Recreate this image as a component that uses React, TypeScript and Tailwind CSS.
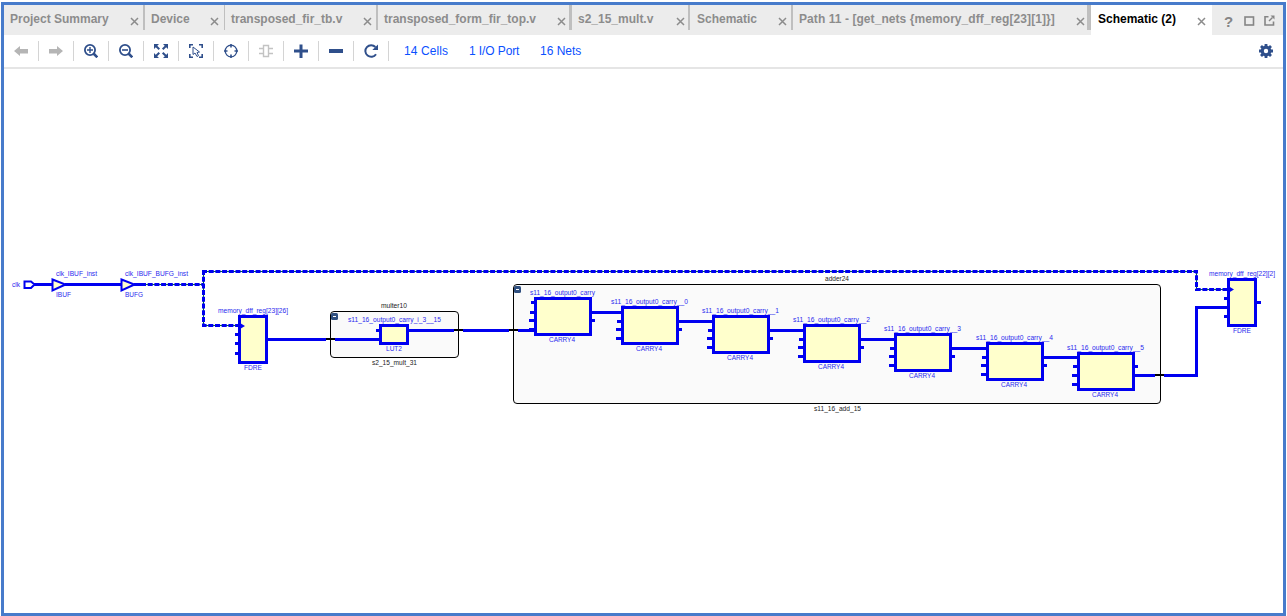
import React from "react";

type TabProps = { label: string; width: string; sep: string; text?: string; close?: string; active?: boolean };

const tabs: TabProps[] = [
  { label: "Project Summary", width: "w-[141px]", sep: "border-r-2" },
  { label: "Device", width: "w-[80px]", sep: "border-r", close: "mr-[5px]" },
  { label: "transposed_fir_tb.v", width: "w-[153px]", sep: "border-r-2" },
  { label: "transposed_form_fir_top.v", width: "w-[194px]", sep: "border-r-3", close: "mr-[3px]" },
  { label: "s2_15_mult.v", width: "w-[118px]", sep: "border-r-2", close: "mr-[3px]" },
  { label: "Schematic", width: "w-[103px]", sep: "border-r-2", text: "pl-[1px]" },
  {
    label: "Path 11 - [get_nets {memory_dff_reg[23][1]}]",
    width: "w-[298px]",
    sep: "border-r-4",
    text: "tracking-[0.07px]",
    close: "mr-[2px]",
  },
  { label: "Schematic (2)", width: "w-[121px]", sep: "", text: "pl-[1px]", close: "mr-[6px]", active: true },
];

function Tab({ label, width, sep, text = "", close = "mr-[4px]", active }: TabProps) {
  return (
    <div className={`h-[30px] shrink-0 ${width} ${active ? "bg-white" : ""}`}>
      <div className={`flex h-[25px] items-center justify-between border-[#bfbfbf] pl-[6px] ${sep}`}>
        <span
          className={`pt-[3px] text-[12px] leading-[14px] font-bold whitespace-pre ${text} ${active ? "text-black" : "text-[#8c8c8c]"}`}
        >
          {label}
        </span>
        <svg className={`mt-[7px] shrink-0 ${close}`} width="9" height="9" viewBox="0 0 9 9">
          <path d="M1 1L8 8M8 1L1 8" stroke="#8c8c8c" strokeWidth="1.5" />
        </svg>
      </div>
    </div>
  );
}

const navy = "#2f4f8b";

const icons: React.ReactNode[] = [
  <path d="M0 7L6 2V5H14V9.5H6V12Z" fill="#b5b5b5" />,
  <path d="M14 7L8 2V5H0V9.5H8V12Z" fill="#b5b5b5" />,
  <g stroke={navy} fill="none">
    <circle cx="6" cy="6" r="5.1" strokeWidth="1.8" />
    <path d="M3 6H9M6 3V9" strokeWidth="1.4" />
    <path d="M9.5 9.5L13.3 13.3" strokeWidth="2.6" />
  </g>,
  <g stroke={navy} fill="none">
    <circle cx="6" cy="6" r="5.1" strokeWidth="1.8" />
    <path d="M3 6H9" strokeWidth="1.6" />
    <path d="M9.5 9.5L13.3 13.3" strokeWidth="2.6" />
  </g>,
  <g fill={navy} stroke={navy}>
    <path d="M0 0H5L0 5ZM14 0V5L9 0ZM0 14V9L5 14ZM14 14H9L14 9Z" stroke="none" />
    <path d="M2 2L5.3 5.3M12 2L8.7 5.3M2 12L5.3 8.7M12 12L8.7 8.7" strokeWidth="2" />
  </g>,
  <g stroke={navy} fill="none">
    <path d="M0.8 4V0.8H4M10 0.8H13.2V4M0.8 10V13.2H4M10 13.2H13.2V10" strokeWidth="1.6" />
    <path d="M4 3L4 10.5L6 9L8 12.5L9.5 11.7L8 8.5L10.5 8Z" strokeWidth="1" />
  </g>,
  <g stroke={navy} fill="none">
    <circle cx="7" cy="7" r="5.8" strokeWidth="1.3" />
    <path d="M7 0V3.5M7 10.5V14M0 7H3.5M10.5 7H14" strokeWidth="1.6" />
  </g>,
  <g stroke="#c3c3c3" fill="none">
    <path d="M4.5 1.5H9.5V12.5H4.5Z" strokeWidth="1.4" />
    <path d="M0 4.5H4M0 9.5H4M10 4.5H14M10 9.5H14" strokeWidth="1.6" />
  </g>,
  <path d="M5.5 0.5H8.5V5.5H14V8.5H8.5V14H5.5V8.5H0V5.5H5.5Z" fill={navy} />,
  <path d="M0 5H14V9H0Z" fill={navy} />,
  <g>
    <path d="M12 10.2A5.8 5.8 0 1 1 11.4 3" stroke={navy} strokeWidth="2" fill="none" />
    <path d="M14 0.5V6H8.3Z" fill={navy} />
  </g>,
];

const BLUE = "#0000f0";
const INK = "#2a2aee";

function Label({ x, y, w, children, dark }: { x: number; y: number; w: number; children: string; dark?: boolean }) {
  return (
    <text x={x} y={y} textLength={w} lengthAdjust="spacingAndGlyphs" fontSize="7" fill={dark ? "#222" : INK}>
      {children}
    </text>
  );
}

function Block({ x, y, w, h }: { x: number; y: number; w: number; h: number }) {
  return <rect x={x + 1.5} y={y + 1.5} width={w - 3} height={h - 3} fill="#ffffcc" stroke={BLUE} strokeWidth="3" />;
}

function Collapse({ x, y }: { x: number; y: number }) {
  return (
    <g>
      <rect x={x} y={y} width="7" height="7" rx="1.5" fill="#2f4f7f" />
      <path d={`M${x + 2} ${y + 3.5}h3`} stroke="#fff" strokeWidth="1" />
    </g>
  );
}

const carries = [
  { x: 534, y: 297, lx: 530, ly: 295, w: 65, name: "s11_16_output0_carry" },
  { x: 621, y: 306, lx: 611, ly: 304, w: 77, name: "s11_16_output0_carry__0" },
  { x: 712, y: 315, lx: 702, ly: 313, w: 77, name: "s11_16_output0_carry__1" },
  { x: 803, y: 324, lx: 793, ly: 322, w: 77, name: "s11_16_output0_carry__2" },
  { x: 894, y: 333, lx: 884, ly: 331, w: 77, name: "s11_16_output0_carry__3" },
  { x: 986, y: 342, lx: 976, ly: 340, w: 77, name: "s11_16_output0_carry__4" },
  { x: 1077, y: 352, lx: 1067, ly: 350, w: 77, name: "s11_16_output0_carry__5" },
];

function Schematic() {
  return (
    <svg width="1279" height="544" viewBox="4 69 1279 544" fontFamily="'Liberation Sans', Arial, sans-serif">
      <g fill="#fafafa" stroke="#000" strokeWidth="1">
        <rect x="330.5" y="311.5" width="128" height="46" rx="3.5" />
        <rect x="513.5" y="284.5" width="647" height="119" rx="3.5" />
      </g>
      <Collapse x={331} y={313} />
      <Collapse x={514} y={286} />

      <g stroke={BLUE} strokeWidth="3" fill="none">
        <path d="M34 284.5H52M65 284.5H121M134 284.5H141" />
        <path d="M268 339.5H326M335 339.5H380M409 330.5H454M463 330.5H509M518 330.5H534" />
        <path d="M1135 375.5H1155M1164 375.5H1196.5V307.5H1228" />
        <path d="M376 330.5H379M1257 302.5H1261" />
        <path d="M235 334.5H239M235 343.5H239M235 353.5H239M1224 298.5H1228M1224 316.5H1228" />
      </g>
      <g stroke="#006a3a" strokeWidth="1" fill="none">
        <path d="M141 284.5H203.5M240 325.5H203.5V271.5H1196.5V289.5H1228" />
      </g>
      <g stroke={BLUE} strokeWidth="3" fill="none" strokeDasharray="5 1.7">
        <path d="M141 284.5H203.5" />
        <path d="M203.5 270V325.5H240" />
        <path d="M202 271.5H1196.5V289.5H1228" />
      </g>
      <g stroke="#000" strokeWidth="2">
        <path d="M326 339H335M454 330H463M509 330H518M1155 375H1164" />
      </g>

      <g fill="#ffffcc" stroke={BLUE} strokeWidth="2">
        <path d="M24.5 281.5H31L34.5 284.5L31 288H24.5Z" fill="#fff" />
        <path d="M52.5 279.5L65.5 284.5L52.5 290.5Z" />
        <path d="M121.5 279.5L134.5 284.5L121.5 290.5Z" />
      </g>

      {carries.map((c, i) => (
        <g key={c.name}>
          <g stroke={BLUE} strokeWidth="3">
            {i < 6 && <path d={`M${c.x + 58} ${c.y + 15.5}H${carries[i + 1].x}`} />}
            {i === 0 && <path d={`M${c.x - 3} ${c.y + 5.5}h4`} />}
            <path d={`M${c.x - 4} ${c.y + (i === 6 ? 14.5 : 15.5)}h4M${c.x - 5} ${c.y + 23.5}h5M${c.x - 5} ${c.y + 32.5}h5`} />
            <path d={`M${c.x + 58} ${c.y + (i === 6 ? 14.5 : 23.5)}h3`} />
          </g>
          <Block x={c.x} y={c.y} w={58} h={39} />
          <Label x={c.lx} y={c.ly} w={c.w}>{c.name}</Label>
          <Label x={c.x + 15} y={c.y + 45} w={26}>CARRY4</Label>
        </g>
      ))}

      <Block x={238} y={315} w={30} h={49} />
      <Block x={379} y={324} w={30} h={21} />
      <Block x={1227} y={278} w={30} h={49} />
      <path d="M240 323L245 326L240 329ZM1229 286.5L1234 289.5L1229 292.5Z" fill={BLUE} />

      <Label x={12} y={287} w={8}>clk</Label>
      <Label x={56} y={276} w={41}>clk_IBUF_inst</Label>
      <Label x={56} y={297} w={15}>IBUF</Label>
      <Label x={125} y={276} w={63}>clk_IBUF_BUFG_inst</Label>
      <Label x={125} y={297} w={18}>BUFG</Label>
      <Label x={218} y={313} w={70}>memory_dff_reg[23][26]</Label>
      <Label x={244} y={370} w={18}>FDRE</Label>
      <Label x={348} y={322} w={93}>s11_16_output0_carry_i_3__15</Label>
      <Label x={386} y={351} w={16}>LUT2</Label>
      <Label x={1209} y={276} w={66}>memory_dff_reg[22][2]</Label>
      <Label x={1233} y={333} w={18}>FDRE</Label>
      <Label x={381} y={308} w={26} dark>multer10</Label>
      <Label x={372} y={365} w={45} dark>s2_15_mult_31</Label>
      <Label x={825} y={281} w={24} dark>adder24</Label>
      <Label x={814} y={411} w={47} dark>s11_16_add_15</Label>
    </svg>
  );
}

export default function App() {
  return (
    <div className="h-[616px] w-[1287px] overflow-hidden bg-white pt-[2px] pr-[1px] pl-[1px] font-['Liberation_Sans',Arial,sans-serif]">
      <div className="flex h-[614px] flex-col border-[3px] border-[#477bcb]">
        <div className="flex h-[30px] shrink-0 bg-[#ececec]">
          {tabs.map((t) => (
            <Tab key={t.label} {...t} />
          ))}
          <div className="flex flex-1 items-start pt-[9px] pl-[12px]">
            <span className="w-[20px] text-[15px] leading-[15px] font-bold text-[#858585]">?</span>
            <svg className="mt-[2px] mr-[9px]" width="11" height="10" viewBox="0 0 11 10">
              <rect x="1" y="1" width="8.5" height="8" fill="none" stroke="#858585" strokeWidth="1.6" />
            </svg>
            <svg className="mt-[1px]" width="11" height="11" viewBox="0 0 11 11">
              <path d="M4.5 1.8H1V10H9.5V6.5" fill="none" stroke="#858585" strokeWidth="1.6" />
              <path d="M5 6L8.5 2.5" stroke="#858585" strokeWidth="1.5" />
              <path d="M6.5 0.5H10.5V4.5Z" fill="#858585" />
            </svg>
          </div>
        </div>
        <div className="flex h-[34px] shrink-0 items-start border-b-2 border-[#e5e5e5] pt-[6px]">
          {icons.map((icon, i) => (
            <div key={i} className="flex h-[20px] w-[35px] items-center justify-center border-r border-[#d4d4d4]">
              <svg width="14" height="14" viewBox="0 0 14 14">
                {icon}
              </svg>
            </div>
          ))}
          <div className="flex pt-[3px] pl-[15px] text-[12px] leading-[14px] whitespace-nowrap text-[#0a50ff]">
            <span className="w-[65px] tracking-[0.1px]">14 Cells</span>
            <span className="w-[71px] tracking-[-0.1px]">1 I/O Port</span>
            <span>16 Nets</span>
          </div>
          <svg className="mt-[3px] mr-[10px] ml-auto" width="14" height="14" viewBox="0 0 14 14">
            <g stroke={navy} fill="none">
              <path d="M7 0V14M0 7H14M2 2L12 12M12 2L2 12" strokeWidth="2.8" />
              <circle cx="7" cy="7" r="3.8" strokeWidth="3.2" fill="#fff" />
            </g>
          </svg>
        </div>
        <Schematic />
      </div>
    </div>
  );
}
